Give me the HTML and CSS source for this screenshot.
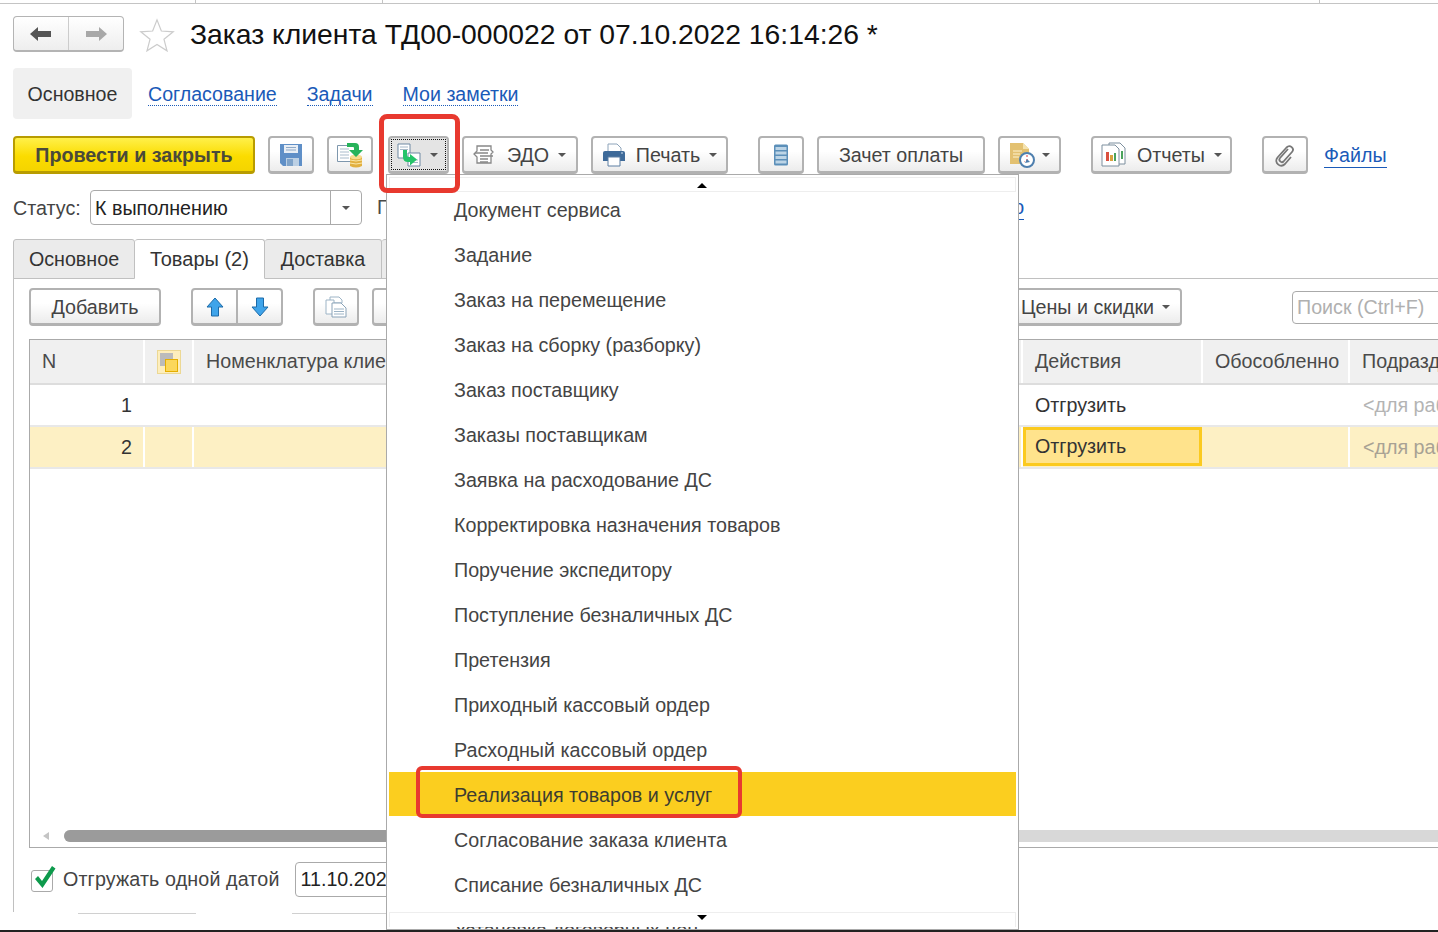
FILE: index.html
```html
<!DOCTYPE html>
<html lang="ru">
<head>
  <meta charset="UTF-8">
  <title>Заказ клиента ТД00-000022</title>
  <link rel="stylesheet" href="styles.css">
</head>
<body>
  <div class="page">
    <!-- верхняя полоска -->
    <div class="topline"><i></i><i></i><i></i></div>

    <div class="head">
      <div class="nav">
        <span class="nav-part">
          <svg width="24" height="18" viewBox="0 0 24 18"><path d="M1 9l8-7v4h13v6H9v4z" fill="#555"/></svg>
        </span>
        <span class="nav-part">
          <svg width="24" height="18" viewBox="0 0 24 18"><path d="M23 9l-8-7v4H2v6h13v4z" fill="#a8a8a8"/></svg>
        </span>
      </div>
      <svg class="star" width="36" height="34" viewBox="0 0 38 36"><path d="M19 2l4.600 11.800 12.600.8-9.800 8 3.200 12.200L19 28l-10.600 6.800 3.200-12.200-9.800-8 12.600-.8z" fill="#fff" stroke="#ccc" stroke-width="1.300"/></svg>
      <h1>Заказ клиента ТД00-000022 от 07.10.2022 16:14:26 *</h1>
    </div>

    <div class="sections">
      <span class="section-cur">Основное</span>
      <a class="section-link">Согласование</a>
      <a class="section-link">Задачи</a>
      <a class="section-link">Мои заметки</a>
    </div>

    <div class="toolbar">
      <button class="btn btn-main">Провести и закрыть</button>
      <button class="btn btn-icon w-save">
        <svg width="24" height="24" viewBox="0 0 24 24"><path d="M1 1h22v22H4l-3-3z" fill="#5f8fc7"/><path d="M5 2h14v8H5z" fill="#e8eef5"/><path d="M7 4.500h10M7 7h10" stroke="#8fa9c6"/><path d="M7 15h13v8H7z" fill="#bcd0e4"/><path d="M8 16h6v7H8z" fill="#7fa3c9"/></svg>
      </button>
      <button class="btn btn-icon w-post">
        <svg width="28" height="26" viewBox="0 0 28 26"><path d="M1.500 3.500h17v16h-17z" fill="#fff" stroke="#7e97ad"/><path d="M4 7h9M4 10h9M4 13h9M4 16h9" stroke="#a9bccb"/><path d="M14 15h12v9q-6 3-12 0z" fill="#e2b040"/><path d="M14 18q6 2 12 0M14 21q6 2 12 0" fill="none" stroke="#fbe7a8"/><ellipse cx="20" cy="15" rx="6" ry="2.300" fill="#f7dc8e"/><path d="M11 1h8q4 0 4 4v3h4l-7 7-7-7h5V6q0-1-1-1h-6z" fill="#27b35a"/></svg>
      </button>
      <button class="btn btn-pressed w-create">
        <span class="focus-frame">
          <svg width="28" height="24" viewBox="0 0 28 24"><path d="M2 1h12v14H2z" fill="#fff" stroke="#6f89a3"/><path d="M4 4h8M4 6.500h8" stroke="#a6b8c8"/><path d="M12 10h12v13H12z" fill="#fff" stroke="#6f89a3"/><path d="M15 17h7M15 19.500h7" stroke="#a6b8c8"/><path d="M7 7h4v5q0 2 2 2h1v-3l7 5.500-7 6V19h-2q-5 0-5-5z" fill="#25c46a"/></svg>
          <i class="caret"></i>
        </span>
      </button>
      <button class="btn w-edo">
        <svg width="26" height="24" viewBox="0 0 26 24"><path d="M6 3h14v4l2 2-2 2v9H6v-6l-3-3 3-3z" fill="#fff" stroke="#888" stroke-width="1.300"/><path d="M9 7h9M4 10h13M9 13h13M9 16h8M9 19h8" stroke="#888" stroke-width="1.300"/></svg>
        <span class="lbl">ЭДО</span><i class="caret"></i>
      </button>
      <button class="btn w-print">
        <svg width="24" height="24" viewBox="0 0 24 24"><path d="M6 1h9l4 4v5H6z" fill="#fff" stroke="#8ea4ba"/><path d="M1 10q0-2 2-2h18q2 0 2 2v8H1z" fill="#3e6a99"/><path d="M6 14h12v9H6z" fill="#fff" stroke="#5c7fa3"/><path d="M19 10h2" stroke="#cfe0ee"/></svg>
        <span class="lbl">Печать</span><i class="caret"></i>
      </button>
      <button class="btn btn-icon w-list">
        <svg width="16" height="22" viewBox="0 0 16 22"><rect x="1" y="0.500" width="14" height="21" rx="1.500" fill="#5b8fb9"/><path d="M2.500 3h11v3h-11zM2.500 7.500h11v3h-11zM2.500 12h11v3h-11zM2.500 16.500h11v3h-11z" fill="#bcd4e6"/></svg>
      </button>
      <button class="btn w-offset">Зачет оплаты</button>
      <button class="btn w-sched">
        <svg width="26" height="26" viewBox="0 0 26 26"><path d="M1 1h13l6 6v15H1z" fill="#e3c171"/><path d="M14 1l6 6h-6z" fill="#f4e2ad"/><path d="M4 9h9M4 12h7M4 15h6" stroke="#fff3cf"/><circle cx="18" cy="18" r="7" fill="#fff" stroke="#4e7fae" stroke-width="2"/><path d="M18 13v5l-3 2" fill="none" stroke="#e03a3a" stroke-dasharray="2 2"/><path d="M16 21l2-4 3 3z" fill="#4e7fae"/></svg>
        <i class="caret"></i>
      </button>
      <button class="btn w-rep">
        <svg width="26" height="26" viewBox="0 0 26 26"><path d="M8 1h11l5 5v16H8z" fill="#fff" stroke="#7d8f9e"/><path d="M1 3h13l4 4v17H1z" fill="#fff" stroke="#7d8f9e"/><path d="M5 10h3v9H5z" fill="#d9503f"/><path d="M9 13h3v6H9z" fill="#d9a23f"/><path d="M13 11h2v8h-2z" fill="#4ba35c"/><path d="M20 9h2v8h-2z" fill="#4ba35c"/></svg>
        <span class="lbl">Отчеты</span><i class="caret"></i>
      </button>
      <button class="btn btn-icon w-clip">
        <svg width="22" height="24" viewBox="0 0 22 24"><path d="M14 6L6 15c-2 2.500 1.500 5.500 3.500 3.500L18 9c3-3.500-2-8-5.500-4.500L3.500 14.500c-4 5 3 11 7.500 6.500l6-7" fill="none" stroke="#777" stroke-width="1.800"/></svg>
      </button>
      <a class="files-link">Файлы</a>
    </div>

    <div class="status-row">
      <label class="status-label">Статус:</label>
      <div class="select">
        <span class="select-val">К выполнению</span>
        <span class="select-btn"><i class="caret"></i></span>
      </div>
      <span class="status-next">П</span>
      <a class="status-link">о</a>
    </div>

    <div class="tabs">
      <span class="tab tab-a">Основное</span>
      <span class="tab tab-b tab-cur">Товары (2)</span>
      <span class="tab tab-c">Доставка</span>
      <span class="tab tab-d"></span>
      <span class="tabs-rest"></span>
    </div>

    <div class="panel">
      <div class="panel-bar">
        <button class="btn w-add">Добавить</button>
        <div class="btn-pair">
          <span class="pair-part">
            <svg width="18" height="20" viewBox="0 0 18 20"><path d="M9 1l8 9h-4.500v9h-7v-9H1z" fill="#3fa4ea" stroke="#1c6aa8"/></svg>
          </span>
          <span class="pair-part">
            <svg width="18" height="20" viewBox="0 0 18 20"><path d="M9 19l8-9h-4.500V1h-7v9H1z" fill="#3fa4ea" stroke="#1c6aa8"/></svg>
          </span>
        </div>
        <button class="btn btn-icon w-copy">
          <svg width="22" height="22" viewBox="0 0 22 22"><path d="M5 1h9l3 3v3H5z" fill="#fff" stroke="#9db4c6"/><path d="M1 4h8v14H1z" fill="#fff" stroke="#9db4c6"/><path d="M7 7h9l5 5v9H7z" fill="#fff" stroke="#8aa3b8"/><path d="M9 13h10M9 15.500h10M9 18h10" stroke="#9db4c6"/></svg>
        </button>
        <button class="btn w-next"></button>
        <span class="panel-fill"></span>
        <button class="btn w-prices"><span class="lbl-prices">Цены и скидки</span><i class="caret"></i></button>
        <div class="search">Поиск (Ctrl+F)</div>
      </div>

      <div class="grid">
        <div class="grid-body">
          <div class="row row-head">
            <div class="cell c-n">N</div>
            <div class="cell c-ico"><span class="head-ico"><i></i><b></b></span></div>
            <div class="cell c-name">Номенклатура клиента</div>
            <div class="cell c-act">Действия</div>
            <div class="cell c-sep">Обособленно</div>
            <div class="cell c-sub">Подразделение</div>
          </div>
          <div class="row row-one">
            <div class="cell c-n num">1</div>
            <div class="cell c-ico"></div>
            <div class="cell c-name"></div>
            <div class="cell c-act">Отгрузить</div>
            <div class="cell c-sep"></div>
            <div class="cell c-sub muted">&lt;для работы</div>
          </div>
          <div class="row row-two">
            <div class="cell c-n num">2</div>
            <div class="cell c-ico"></div>
            <div class="cell c-name"></div>
            <div class="cell c-act cell-cur">Отгрузить</div>
            <div class="cell c-sep"></div>
            <div class="cell c-sub muted">&lt;для работы</div>
          </div>
        </div>
        <div class="hscroll">
          <i class="hscroll-left"></i>
          <span class="hscroll-track"><span class="hscroll-thumb"></span></span>
        </div>
      </div>

      <div class="ship-row">
        <span class="check">
          <svg width="24" height="26" viewBox="0 0 24 26"><path d="M3 14l3-3 4 5L20 1l3.500 2.500L10.500 23z" fill="#0d9a4c"/></svg>
        </span>
        <span class="ship-label">Отгружать одной датой</span>
        <div class="date-input">11.10.2022</div>
      </div>
      <div class="ship-rule"><i></i><i></i></div>
    </div>
    <div class="page-end"></div>

    <!-- выпадающее меню "Создать на основании" -->
    <div class="menu">
      <div class="menu-scroll"><i class="tri-up"></i></div>
      <div class="menu-list">
        <div class="menu-item">Документ сервиса</div>
        <div class="menu-item">Задание</div>
        <div class="menu-item">Заказ на перемещение</div>
        <div class="menu-item">Заказ на сборку (разборку)</div>
        <div class="menu-item">Заказ поставщику</div>
        <div class="menu-item">Заказы поставщикам</div>
        <div class="menu-item">Заявка на расходование ДС</div>
        <div class="menu-item">Корректировка назначения товаров</div>
        <div class="menu-item">Поручение экспедитору</div>
        <div class="menu-item">Поступление безналичных ДС</div>
        <div class="menu-item">Претензия</div>
        <div class="menu-item">Приходный кассовый ордер</div>
        <div class="menu-item">Расходный кассовый ордер</div>
        <div class="menu-item menu-item-cur">Реализация товаров и услуг</div>
        <div class="menu-item">Согласование заказа клиента</div>
        <div class="menu-item">Списание безналичных ДС</div>
        <div class="menu-item">Установка договорных цен</div>
      </div>
      <div class="menu-scroll menu-scroll-bottom"><i class="tri-down"></i></div>
    </div>

    <!-- красные рамки поверх скриншота -->
    <div class="mark mark-btn"></div>
    <div class="mark mark-item"></div>
  </div>
</body>
</html>
```

FILE: styles.css
```css
* {
  box-sizing: border-box;
}
body {
  margin: 0;
  background: #fff;
  font-family: "Liberation Sans", Arial, sans-serif;
  color: #4a4a4a;
  overflow: hidden;
}
.page {
  position: relative;
  width: 1438px;
  height: 932px;
  overflow: hidden;
}
i, b {
  display: block;
}

/* верхняя полоска */
.topline {
  height: 4px;
  border-bottom: 1px solid #c4c4c4;
  display: flex;
  padding-left: 195px;
  gap: 186px;
}
.topline i {
  width: 1px;
  height: 3px;
  background: #c4c4c4;
}
.topline i:last-child {
  margin-left: 750px;
}

/* заголовок */
.head {
  display: flex;
  align-items: center;
  height: 48px;
  margin-top: 12px;
  padding-left: 13px;
  padding-bottom: 12px;
}
.nav {
  display: flex;
  width: 111px;
  height: 36px;
  border: 1px solid #b4b4b4;
  border-bottom-width: 2px;
  border-radius: 4px;
  background: linear-gradient(#fff, #eee);
}
.nav-part {
  flex: 1;
  display: flex;
  align-items: center;
  justify-content: center;
}
.nav-part + .nav-part {
  border-left: 1px solid #ccc;
}
.star {
  margin-left: 15px;
  margin-top: 1px;
}
h1 {
  margin: 0 0 0 15px;
  font-size: 28.3px;
  font-weight: normal;
  color: #111;
  white-space: nowrap;
}

/* ссылки разделов */
.sections {
  display: flex;
  align-items: center;
  height: 51px;
  margin-top: 4px;
  margin-left: 13px;
  font-size: 19.6px;
}
.section-cur {
  display: flex;
  align-items: center;
  justify-content: center;
  width: 119px;
  height: 51px;
  padding-top: 2px;
  background: #f0f0f0;
  border-radius: 4px;
  color: #333;
  margin-right: 16px;
}
.section-link {
  color: #1a5ab8;
  border-bottom: 1px dotted #1a5ab8;
  line-height: 21px;
  margin-top: 2px;
  margin-right: 30px;
}

/* кнопки */
.btn {
  display: flex;
  align-items: center;
  justify-content: center;
  height: 38px;
  padding: 1px 0 0;
  border: 2px solid #b2b2b2;
  border-bottom-width: 3px;
  border-radius: 4px;
  background: linear-gradient(#fff 40%, #ececec);
  font-family: inherit;
  font-size: 19.7px;
  color: #444;
  flex: none;
  white-space: nowrap;
}
.btn-main {
  width: 242px;
  background: linear-gradient(#fff04a, #fbdc00 55%, #f4d400);
  border-color: #b89c00;
  font-weight: bold;
  color: #4a4a3a;
}
.btn-pressed {
  background: #e4e4e4;
  padding: 1px;
}
.focus-frame {
  display: flex;
  align-items: center;
  width: 100%;
  height: 100%;
  border: 1px dotted #111;
  padding-left: 4px;
}
.caret {
  width: 0;
  height: 0;
  border-left: 4px solid transparent;
  border-right: 4px solid transparent;
  border-top: 4px solid #555;
}
.lbl {
  margin-left: 10px;
  margin-right: 9px;
}
.toolbar {
  display: flex;
  height: 38px;
  margin-top: 17px;
  margin-left: 13px;
}
.w-save { width: 46px; margin-left: 13px; }
.w-post { width: 46px; margin-left: 13px; }
.w-create { width: 61px; margin-left: 15px; }
.w-create .caret { margin-left: 6px; }
.w-edo { width: 116px; margin-left: 13px; padding-right: 3px; }
.w-print { width: 137px; margin-left: 13px; }
.w-list { width: 46px; margin-left: 30px; }
.w-offset { width: 168px; margin-left: 13px; }
.w-sched { width: 63px; margin-left: 13px; }
.w-sched .caret { margin-left: 7px; }
.w-rep { width: 141px; margin-left: 30px; }
.w-clip { width: 46px; margin-left: 30px; }
.files-link {
  margin-left: 16px;
  font-size: 19.7px;
  line-height: 23px;
  height: 24px;
  margin-top: 8px;
  color: #1a5ab8;
  border-bottom: 1px solid #1a5ab8;
}

/* статус */
.status-row {
  display: flex;
  align-items: center;
  height: 35px;
  margin-top: 16px;
  margin-left: 13px;
  font-size: 19.7px;
}
.status-label {
  width: 77px;
  padding-top: 2px;
  color: #444;
}
.select {
  display: flex;
  width: 272px;
  height: 35px;
  border: 1px solid #aaa;
  border-radius: 4px;
}
.select-val {
  flex: 1;
  padding-left: 4px;
  line-height: 34px;
  color: #222;
}
.select-btn {
  width: 31px;
  border-left: 1px solid #aaa;
  display: flex;
  align-items: center;
  justify-content: center;
}
.status-next {
  margin-left: 15px;
}
.status-link {
  margin-left: 622px;
  color: #1a5ab8;
  border-bottom: 1px solid #1a5ab8;
}

/* вкладки */
.tabs {
  display: flex;
  height: 40px;
  margin-top: 14px;
  margin-left: 13px;
  font-size: 19.7px;
}
.tab {
  display: flex;
  align-items: center;
  justify-content: center;
  height: 40px;
  background: #ebebeb;
  border: 1px solid #c0c0c0;
  border-left: 0;
  border-radius: 3px 3px 0 0;
  color: #333;
}
.tab-a { width: 122px; border-left: 1px solid #c0c0c0; }
.tab-b { width: 130px; }
.tab-c { width: 117px; }
.tab-d { width: 60px; }
.tab-cur {
  font-size: 20px;
  background: #fff;
  border-bottom-color: #fff;
}
.tabs-rest {
  flex: 1;
  border-bottom: 1px solid #c0c0c0;
}

/* панель товаров */
.panel {
  height: 634px;
  margin-left: 13px;
  margin-top: -1px;
  padding: 10px 0 0 15px;
  border-left: 1px solid #c0c0c0;
}
.panel-bar {
  display: flex;
  height: 38px;
}
.w-add { width: 132px; }
.btn-pair {
  display: flex;
  width: 92px;
  height: 38px;
  margin-left: 30px;
  flex: none;
  border: 2px solid #b2b2b2;
  border-bottom-width: 3px;
  border-radius: 4px;
  background: linear-gradient(#fff 40%, #ececec);
}
.pair-part {
  flex: 1;
  display: flex;
  align-items: center;
  justify-content: center;
}
.pair-part + .pair-part {
  border-left: 2px solid #b2b2b2;
}
.w-copy { width: 46px; margin-left: 30px; }
.w-next { width: 46px; margin-left: 13px; }
.panel-fill {
  flex: 1;
}
.w-prices {
  width: 200px;
  margin-right: 110px;
  justify-content: flex-end;
  padding-right: 10px;
}
.lbl-prices {
  margin-right: 8px;
}
.search {
  flex: none;
  width: 150px;
  height: 33px;
  margin-top: 3px;
  margin-right: -4px;
  padding-left: 4px;
  border: 1px solid #aaa;
  border-radius: 4px;
  font-size: 19.7px;
  line-height: 31px;
  color: #b0b0b0;
  white-space: nowrap;
}

/* таблица */
.grid {
  display: flex;
  flex-direction: column;
  height: 509px;
  margin-top: 13px;
  border: 1px solid #aaa;
  border-right: 0;
  font-size: 19.7px;
  overflow: hidden;
}
.grid-body {
  flex: 1;
}
.row {
  display: flex;
  border-bottom: 1px solid #e2e2e2;
}
.row-head {
  height: 45px;
  background: #f0f0f0;
  border-bottom: 2px solid #ddd;
}
.row-one {
  height: 42px;
  border-bottom: 2px solid #e8e8e8;
}
.row-two {
  height: 42px;
  background: #fdf0c4;
  border-bottom: 2px solid #e8e8e8;
}
.cell {
  display: flex;
  align-items: center;
  padding-left: 12px;
  border-right: 2px solid #fff;
  white-space: nowrap;
  overflow: hidden;
  flex: none;
  color: #333;
}
.row-head .cell {
  color: #4a4a4a;
  border-right-color: #fff;
}
.c-n { width: 115px; }
.c-ico { width: 49px; padding: 0; justify-content: center; }
.c-name { width: 829px; }
.c-act { width: 180px; }
.c-sep { width: 147px; }
.c-sub { width: 150px; }
.num {
  justify-content: flex-end;
  padding-right: 11px;
}
.muted {
  padding-left: 13px;
  color: #b4b4b4;
}
.row-two .muted {
  color: #a8a294;
}
.cell-cur {
  width: 179px;
  margin-right: 1px;
  background: #ffe38c;
  border: 3px solid #fbca1f;
  padding-left: 9px;
  height: 39px;
  color: #333;
}
.head-ico {
  position: relative;
  display: block;
  width: 24px;
  height: 24px;
  background: #fdeebd;
  border: 1px solid #ecd894;
}
.head-ico i {
  position: absolute;
  left: 2px;
  top: 2px;
  width: 13px;
  height: 13px;
  background: #bbb;
}
.head-ico b {
  position: absolute;
  left: 7px;
  top: 8px;
  width: 13px;
  height: 13px;
  background: #fbd75b;
  border: 1px solid #e5ae00;
}
.hscroll {
  display: flex;
  align-items: center;
  height: 12px;
  margin-bottom: 5px;
  padding-left: 13px;
  flex: none;
}
.hscroll-left {
  width: 0;
  height: 0;
  border-top: 4px solid transparent;
  border-bottom: 4px solid transparent;
  border-right: 6px solid #c4c4c4;
}
.hscroll-track {
  flex: 1;
  height: 12px;
  margin-left: 15px;
  background: #d8d8d8;
  border-radius: 6px 0 0 6px;
}
.hscroll-thumb {
  display: block;
  width: 400px;
  height: 12px;
  background: #9b9b9b;
  border-radius: 6px 0 0 6px;
}

/* нижняя строка */
.ship-row {
  display: flex;
  align-items: center;
  height: 35px;
  margin-top: 14px;
  margin-left: 2px;
  font-size: 19.7px;
}
.check {
  position: relative;
  width: 22px;
  height: 22px;
  border: 1px solid #aaa;
  border-radius: 3px;
  margin-top: 2px;
}
.check svg {
  position: absolute;
  left: 0;
  top: -6px;
}
.ship-label {
  margin-left: 10px;
  letter-spacing: 0.13px;
  color: #444;
}
.date-input {
  width: 200px;
  height: 35px;
  margin-left: 15px;
  padding-left: 5px;
  border: 1px solid #aaa;
  border-radius: 4px;
  line-height: 33px;
  color: #222;
}
.ship-rule {
  display: flex;
  margin-top: 16px;
  padding-left: 49px;
  gap: 96px;
}
.ship-rule i {
  width: 118px;
  height: 1px;
  background: #d0d0d0;
}
.page-end {
  position: absolute;
  left: 0;
  right: 0;
  bottom: 0;
  height: 2px;
  background: #222;
}

/* меню */
.menu {
  position: absolute;
  left: 386px;
  top: 174px;
  width: 633px;
  height: 756px;
  background: #fff;
  border: 1px solid #aaa;
  overflow: hidden;
}
.menu-scroll {
  position: absolute;
  left: 2px;
  right: 2px;
  top: 2px;
  height: 15px;
  background: #fff;
  border: 1px solid #eee;
  z-index: 1;
}
.menu-scroll-bottom {
  top: auto;
  bottom: 2px;
  height: 15px;
  border-bottom: 0;
}
.tri-up, .tri-down {
  position: absolute;
  left: 307px;
  width: 0;
  height: 0;
  border-left: 5px solid transparent;
  border-right: 5px solid transparent;
}
.tri-up {
  top: 5px;
  border-bottom: 5px solid #000;
}
.tri-down {
  top: 2px;
  border-top: 5px solid #000;
}
.menu-list {
  padding-top: 13px;
  padding-left: 2px;
  padding-right: 2px;
}
.menu-item {
  height: 45px;
  padding-left: 65px;
  font-size: 19.7px;
  line-height: 45px;
  color: #444;
  white-space: nowrap;
}
.menu-item-cur {
  height: 44px;
  margin-top: -1px;
  margin-bottom: 2px;
  line-height: 46px;
  background: #fbce1f;
  color: #3d3d30;
}

/* красные рамки */
.mark {
  position: absolute;
  z-index: 2;
  border: 4px solid #e8392f;
  border-radius: 8px;
}
.mark-btn {
  left: 379px;
  top: 114px;
  width: 81px;
  height: 79px;
  border-width: 5px;
}
.mark-item {
  left: 416px;
  top: 766px;
  width: 326px;
  height: 52px;
  border-radius: 6px;
}
```
